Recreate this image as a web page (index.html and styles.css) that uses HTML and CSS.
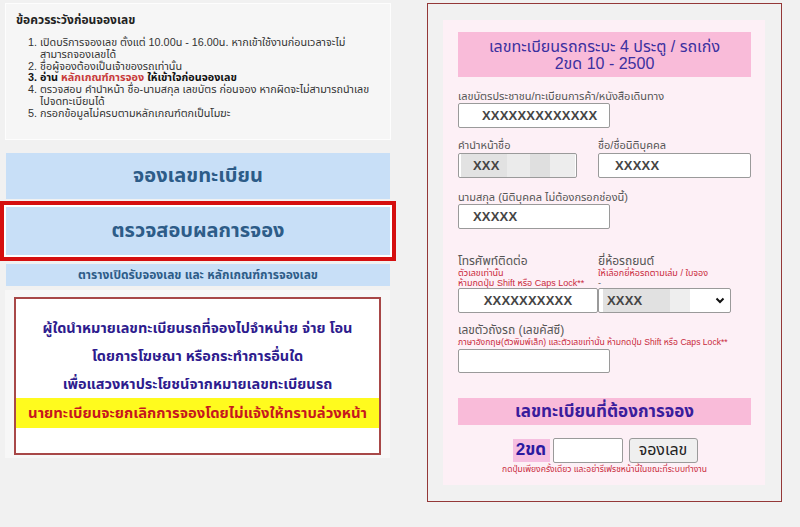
FILE: index.html
```html
<!DOCTYPE html>
<html lang="th">
<head>
<meta charset="utf-8">
<title>จองเลขทะเบียน</title>
<link rel="stylesheet" href="styles.css">
</head>
<body>
<div class="page">
  <div class="left">
    <div class="notes">
      <div class="notes-title">ข้อควรระวังก่อนจองเลข</div>
      <ol class="notes-list">
        <li>เปิดบริการจองเลข ตั้งแต่ 10.00น - 16.00น. หากเข้าใช้งานก่อนเวลาจะไม่<br>สามารถจองเลขได้</li>
        <li>ชื่อผู้จองต้องเป็นเจ้าของรถเท่านั้น</li>
        <li class="strong">อ่าน <span class="red">หลักเกณฑ์การจอง</span> ให้เข้าใจก่อนจองเลข</li>
        <li>ตรวจสอบ คำนำหน้า ชื่อ-นามสกุล เลขบัตร ก่อนจอง หากผิดจะไม่สามารถนำเลข<br>ไปจดทะเบียนได้</li>
        <li>กรอกข้อมูลไม่ครบตามหลักเกณฑ์ตกเป็นโมฆะ</li>
      </ol>
    </div>
    <div class="menu">
      <div class="menu-btn">จองเลขทะเบียน</div>
      <div class="menu-btn menu-btn-hl">ตรวจสอบผลการจอง</div>
      <div class="menu-link">ตารางเปิดรับจองเลข และ หลักเกณฑ์การจองเลข</div>
    </div>
    <div class="notice-wrap">
      <div class="notice">
        <p class="notice-line">ผู้ใดนำหมายเลขทะเบียนรถที่จองไปจำหน่าย จ่าย โอน</p>
        <p class="notice-line">โดยการโฆษณา หรือกระทำการอื่นใด</p>
        <p class="notice-line">เพื่อแสวงหาประโยชน์จากหมายเลขทะเบียนรถ</p>
        <p class="notice-warn">นายทะเบียนจะยกเลิกการจองโดยไม่แจ้งให้ทราบล่วงหน้า</p>
      </div>
    </div>
  </div>

  <div class="right">
    <div class="card">
      <div class="card-head">
        <div>เลขทะเบียนรถกระบะ 4 ประตู / รถเก่ง</div>
        <div>2ขด 10 - 2500</div>
      </div>

      <div class="group g1">
        <div class="label">เลขบัตรประชาชน/ทะเบียนการค้า/หนังสือเดินทาง</div>
        <div class="field f-id">XXXXXXXXXXXXX</div>
      </div>

      <div class="row g2">
        <div class="group">
          <div class="label">คำนำหน้าชื่อ</div>
          <div class="field f-prefix">XXX</div>
        </div>
        <div class="group">
          <div class="label">ชื่อ/ชื่อนิติบุคคล</div>
          <div class="field f-name">XXXXX</div>
        </div>
      </div>

      <div class="group g3">
        <div class="label">นามสกุล (นิติบุคคล ไม่ต้องกรอกช่องนี้)</div>
        <div class="field f-surname">XXXXX</div>
      </div>

      <div class="row g4">
        <div class="group">
          <div class="label label-lg">โทรศัพท์ติดต่อ</div>
          <div class="hint">ตัวเลขเท่านั้น</div>
          <div class="hint">ห้ามกดปุ่ม Shift หรือ Caps Lock**</div>
          <div class="field f-tel">XXXXXXXXXX</div>
        </div>
        <div class="group">
          <div class="label label-lg">ยี่ห้อรถยนต์</div>
          <div class="hint">ให้เลือกยี่ห้อรถตามเล่ม / ใบจอง</div>
          <div class="hint hint-dash">-</div>
          <div class="field f-brand">
            <span>XXXX</span>
            <svg class="chev" width="10" height="7" viewBox="0 0 10 7"><polyline points="1.5,1.5 5,5 8.5,1.5" fill="none" stroke="#111" stroke-width="2"/></svg>
          </div>
        </div>
      </div>

      <div class="group g5">
        <div class="label label-lg">เลขตัวถังรถ (เลขคัสซี)</div>
        <div class="hint hint-long">ภาษาอังกฤษ(ตัวพิมพ์เล็ก) และตัวเลขเท่านั้น ห้ามกดปุ่ม Shift หรือ Caps Lock**</div>
        <div class="field f-chassis"></div>
      </div>

      <div class="band">เลขทะเบียนที่ต้องการจอง</div>

      <div class="book-row">
        <div class="prefix-tag">2ขด</div>
        <div class="field f-num"></div>
        <div class="book-btn">จองเลข</div>
      </div>
      <div class="book-note">กดปุ่มเพียงครั้งเดียว และอย่ารีเฟรชหน้านี้ในขณะที่ระบบทำงาน</div>
    </div>
  </div>
</div>
</body>
</html>
```

FILE: styles.css
```css
* { box-sizing: border-box; }

body {
  margin: 0;
  background: #f1f1f1;
  font-family: Tahoma, "Liberation Sans", "Noto Sans Thai", "DejaVu Sans", sans-serif;
  color: #222;
}

.page {
  display: flex;
  align-items: flex-start;
  width: 800px;
  height: 527px;
  overflow: hidden;
}

/* ---------- left column ---------- */
.left {
  width: 392px;
  padding-left: 5px;
  display: flex;
  flex-direction: column;
}

.notes {
  margin-top: 3px;
  width: 386px;
  height: 137px;
  background: #f6f6f6;
  border: 1px solid #fdfdfd;
  padding: 9px 10px 0 10px;
}

.notes-title {
  font-size: 12px;
  font-weight: bold;
  line-height: 15px;
  color: #222;
}

.notes-list {
  margin: 9px 0 0 0;
  padding-left: 24px;
  font-size: 10.8px;
  line-height: 11.8px;
  color: #333;
}

.notes-list .strong { font-weight: bold; color: #111; }
.notes-list .red { color: #c83a3a; }

.menu {
  margin-top: 13px;
  margin-left: 1px;
  width: 384px;
  display: flex;
  flex-direction: column;
}

.menu-btn {
  height: 46px;
  background: #c8dff7;
  color: #2d5c88;
  font-size: 20px;
  font-weight: bold;
  display: flex;
  align-items: center;
  justify-content: center;
}

.menu-btn-hl {
  margin-top: 8px;
  height: 48px;
  box-shadow: 0 0 0 2px #ffffff, 0 0 0 6px #d50f0f;
}

.menu-link {
  margin-top: 9px;
  height: 22px;
  background: #c8dff7;
  color: #2d5c88;
  font-size: 12px;
  font-weight: bold;
  display: flex;
  align-items: center;
  justify-content: center;
}

.notice-wrap {
  margin-top: 4px;
  width: 385px;
  height: 168px;
  background: #f7f7f7;
  padding: 7px 9px 0 9px;
}

.notice {
  height: 158px;
  background: #fff;
  border: 2px solid #a84848;
  padding-top: 15px;
  text-align: center;
}

.notice-line {
  margin: 0;
  font-size: 14.5px;
  font-weight: bold;
  line-height: 28px;
  color: #2e1c8e;
  white-space: nowrap;
}

.notice-warn {
  margin: 0;
  background: #fffb1e;
  color: #c6171f;
  font-size: 14.8px;
  font-weight: bold;
  line-height: 30px;
  white-space: nowrap;
}

/* ---------- right column ---------- */
.right {
  margin-top: 3px;
  margin-left: 35px;
  width: 355px;
  height: 499px;
  border: 1px solid #943838;
  padding: 16px 16px 16px 15px;
}

.card {
  height: 465px;
  background: #fdf0f6;
  padding: 12px 14px 0 15px;
  display: flex;
  flex-direction: column;
}

.card-head {
  width: 293px;
  height: 45px;
  background: #f9bbd9;
  color: #3b30a0;
  font-size: 16px;
  line-height: 17px;
  display: flex;
  flex-direction: column;
  align-items: center;
  justify-content: center;
}

.group { display: flex; flex-direction: column; }
.row { display: flex; }

.label {
  font-size: 11px;
  line-height: 13px;
  color: #555;
  white-space: nowrap;
}

.label-lg {
  font-size: 12px;
  line-height: 14px;
}

.hint {
  font-size: 9px;
  line-height: 10px;
  color: #c92a3c;
  white-space: nowrap;
}

.hint-long { font-size: 8.6px; }
.hint-dash { color: #555; }

.field {
  height: 25px;
  background: #fff;
  border: 1px solid #9a9a9a;
  border-radius: 2px;
  font-family: "Liberation Sans", Arial, sans-serif;
  font-size: 13px;
  font-weight: bold;
  color: #454545;
  display: flex;
  align-items: center;
  letter-spacing: 0.2px;
}

.g1 { margin-top: 13px; }
.f-id { width: 152px; padding-left: 23px; }

.g2 { margin-top: 11px; gap: 21px; }
.g2 .field { margin-top: 1px; }
.f-prefix {
  width: 119px;
  padding-left: 14px;
  background: linear-gradient(90deg, #fff 0 2px, #e2e2e2 2px 48px, #ebebeb 48px 71px, #dfdfdf 71px 91px, #ededed 91px 116px, #fff 116px);
}
.f-name { width: 153px; padding-left: 16px; }

.g3 { margin-top: 13px; }
.f-surname { width: 152px; padding-left: 14px; }

.g4 { margin-top: 25px; }
.f-tel { width: 140px; justify-content: center; }
.f-brand {
  width: 133px;
  padding-left: 8px;
  padding-right: 5px;
  justify-content: space-between;
  background: linear-gradient(90deg, #fff 0 4px, #e1e1e1 4px 71px, #eeeeee 71px 91px, #fff 91px);
}
.chev { display: block; }

.g5 { margin-top: 10px; }
.g5 .field { margin-top: 2px; }
.f-chassis { width: 152px; height: 24px; }

.band {
  margin-top: 25px;
  width: 293px;
  height: 27px;
  background: #f9bbd9;
  color: #3a1d9c;
  font-size: 17px;
  font-weight: bold;
  display: flex;
  align-items: center;
  justify-content: center;
}

.book-row {
  margin-top: 12px;
  width: 293px;
  height: 26px;
  display: flex;
  align-items: center;
  justify-content: center;
  padding-left: 1px;
}

.prefix-tag {
  width: 37px;
  height: 23px;
  background: #f6bfe0;
  color: #2b1aa0;
  font-size: 17px;
  font-weight: bold;
  display: flex;
  align-items: center;
  justify-content: center;
}

.f-num {
  width: 70px;
  margin-left: 3px;
}

.book-btn {
  margin-left: 6px;
  width: 69px;
  height: 25px;
  background: #efefef;
  border: 1px solid #9a9a9a;
  border-radius: 3px;
  color: #222;
  font-size: 16px;
  display: flex;
  align-items: center;
  justify-content: center;
}

.book-note {
  margin-top: 1px;
  width: 293px;
  text-align: center;
  font-size: 8.5px;
  line-height: 10px;
  color: #c92a3c;
  white-space: nowrap;
}
```
